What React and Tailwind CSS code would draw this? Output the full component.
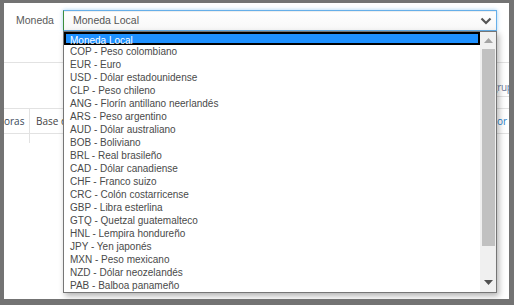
const monedas = [
  "Moneda Local",
  "COP - Peso colombiano",
  "EUR - Euro",
  "USD - Dólar estadounidense",
  "CLP - Peso chileno",
  "ANG - Florín antillano neerlandés",
  "ARS - Peso argentino",
  "AUD - Dólar australiano",
  "BOB - Boliviano",
  "BRL - Real brasileño",
  "CAD - Dólar canadiense",
  "CHF - Franco suizo",
  "CRC - Colón costarricense",
  "GBP - Libra esterlina",
  "GTQ - Quetzal guatemalteco",
  "HNL - Lempira hondureño",
  "JPY - Yen japonés",
  "MXN - Peso mexicano",
  "NZD - Dólar neozelandés",
  "PAB - Balboa panameño",
];

function Dropdown() {
  return (
    <div className="absolute left-[59px] top-[28px] w-[434px] h-[262px] bg-white border border-[#767676] shadow-[2px_3px_6px_rgba(0,0,0,0.3)] flex">
      {/* Options */}
      <ul className="flex-1 font-['Liberation_Sans',Arial,sans-serif] text-[10px] text-[#4a4a4a]">
        {monedas.map((m, i) => (
          <li
            key={m}
            className={`h-[13px] leading-[13px] ${
              i === 0
                ? "bg-[#1e90ff] text-white border-2 border-black pl-[4px] leading-[9px]"
                : "pl-[6px]"
            }`}
          >
            {m}
          </li>
        ))}
      </ul>

      {/* Scrollbar */}
      <div className="w-[16px] bg-[#f0f0f0] flex flex-col items-center">
        <div className="h-[17px] flex items-center justify-center">
          <svg width="9" height="5" viewBox="0 0 9 5">
            <path d="M0 5 L4.5 0 L9 5 Z" fill="#a3a3a3" />
          </svg>
        </div>
        <div className="w-[13px] h-[197px] bg-[#c1c1c1]" />
        <div className="flex-1 flex items-end justify-center pb-[7px]">
          <svg width="9" height="5" viewBox="0 0 9 5">
            <path d="M0 0 L9 0 L4.5 5 Z" fill="#505050" />
          </svg>
        </div>
      </div>
    </div>
  );
}

export default function App() {
  return (
    <div className="w-[514px] h-[305px] bg-[#737373] pt-[3px] pl-[4px]">
      <div className="relative w-[505px] h-[296px] bg-white overflow-hidden">
        {/* Moneda row */}
        <div className="h-[60px] border-b border-[#e2e2e2] pt-[7px] flex items-start">
          <label className="w-[59px] pl-[12px] h-[21px] leading-[21px] text-[10.5px] text-[#5a5a5a] font-['Liberation_Sans',Arial,sans-serif]">
            Moneda
          </label>
          <div className="w-[434px] h-[21px] flex items-center justify-between border border-[#66afe9] border-l-[#3c8d3c] shadow-[0_0_4px_rgba(102,175,233,0.6),inset_0_1px_1px_rgba(0,0,0,0.075)] bg-gradient-to-b from-white to-[#f7f7f7] pl-[9px] pr-[4px]">
            <span className="text-[10.5px] text-[#555] font-['Liberation_Sans',Arial,sans-serif]">
              Moneda Local
            </span>
            <svg width="12" height="8" viewBox="0 0 12 8">
              <path d="M1.5 1.5 L6 6 L10.5 1.5" fill="none" stroke="#555" strokeWidth="2.2" />
            </svg>
          </div>
        </div>

        {/* Toolbar */}
        <div className="h-[34px] flex">
          <div className="ml-[380px] flex-1 border-b border-[#e2e2e2] pt-[17px] pl-[102px] whitespace-nowrap text-[10px] leading-[14px] text-[#6b7b9b] font-['Open_Sans',sans-serif] tracking-[-0.3px]">
            Agrupar
          </div>
        </div>

        {/* Table */}
        <div className="mt-[11px] font-['Open_Sans',sans-serif] text-[10px]">
          <div className="h-[26px] border-y border-[#e2e2e2] flex items-center">
            <div className="w-[26px] h-full border-r border-[#e2e2e2] flex items-center text-[#3a4a5a]">
              oras
            </div>
            <div className="flex-1 pl-[6px] text-[#444] whitespace-nowrap">Base de cálculo</div>
            <div className="w-[12px] text-[#2a7fc8]">or</div>
          </div>
          <div className="h-[9px] flex">
            <div className="w-[26px] border-r border-[#e2e2e2]" />
          </div>
        </div>

        <Dropdown />
      </div>
    </div>
  );
}
